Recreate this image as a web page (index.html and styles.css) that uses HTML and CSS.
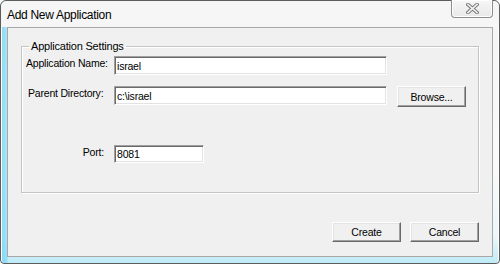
FILE: index.html
```html
<!DOCTYPE html>
<html lang="en">
<head>
    <meta charset="UTF-8">
    <title>Add New Application</title>
    <link rel="stylesheet" href="styles.css">
</head>
<body>

    <div class="window">
        <div class="title-bar">
            <span class="title">Add New Application</span>
            <button class="close-btn" title="Close">
                <svg width="13" height="11" viewBox="0 0 13 11">
                    <path d="M2 1.5 L11 9.5 M11 1.5 L2 9.5" stroke="#7a7a7a" stroke-width="3.6" stroke-linecap="square"/>
                    <path d="M2 1.5 L11 9.5 M11 1.5 L2 9.5" stroke="#f4f4f4" stroke-width="1.6" stroke-linecap="square"/>
                </svg>
            </button>
        </div>

        <div class="client">
            <fieldset class="group">
                <legend>Application Settings</legend>
                <div class="form-grid">
                    <label class="lbl" for="app-name">Application Name:</label>
                    <input class="field" type="text" id="app-name" value="israel">
                    <span></span>

                    <label class="lbl lbl-dir" for="parent-dir">Parent Directory:</label>
                    <input class="field" type="text" id="parent-dir" value="c:\israel">
                    <button class="btn browse-btn">Browse...</button>

                    <label class="lbl lbl-port" for="port">Port:</label>
                    <input class="field port-field" type="text" id="port" value="8081">
                </div>
            </fieldset>

            <div class="footer">
                <button class="btn">Create</button>
                <button class="btn">Cancel</button>
            </div>
        </div>
    </div>

</body>
</html>
```

FILE: styles.css
```css
body {
    margin: 0;
    font-family: "Liberation Sans", Arial, sans-serif;
    font-size: 10.5px;
    letter-spacing: -0.2px;
    color: #000;
}
.window {
    width: 500px;
    height: 264px;
    box-sizing: border-box;
    border: 1px solid #5c5c5c;
    border-radius: 6px 6px 4px 4px;
    padding: 0 6px 6px;
    display: flex;
    flex-direction: column;
    background:
        linear-gradient(90deg, rgba(120, 215, 245, 0.9) 0, rgba(120, 215, 245, 0.6) 6px, rgba(255, 255, 255, 0) 7px),
        linear-gradient(180deg, #f4f4f4 0%, #fafafa 60%, #eaf7fc 90%, #bfeaf8 100%);
    box-shadow: inset 1px 0 0 #fff, inset -1px 0 0 #fff;
}
.title-bar {
    height: 26px;
    display: flex;
    align-items: flex-start;
    background: #f6f6f6;
    margin: 0 -6px;
    padding: 0 6px;
    border-radius: 6px 6px 0 0;
}
.title {
    font-size: 12px;
    letter-spacing: -0.3px;
    line-height: 16px;
    padding-top: 6px;
    color: #000;
}
.close-btn {
    margin-left: auto;
    margin-top: -1px;
    width: 42px;
    height: 18px;
    padding: 0;
    border: 1px solid #8c8c8c;
    border-top: none;
    border-radius: 0 0 4px 4px;
    background: linear-gradient(180deg, #f7f7f7, #e8e8e8);
    box-shadow: inset 0 0 0 1px #fff;
    display: flex;
    align-items: center;
    justify-content: center;
}
.client {
    flex: 1;
    border: 1px solid #a8a8a8;
    background: #f0f0f0;
    display: flex;
    flex-direction: column;
    padding: 0 13px 14px;
}
.group {
    margin: 12px 0 0;
    height: 153px;
    box-sizing: border-box;
    border: 1px solid #c4c4c4;
    box-shadow: inset 1px 1px 0 #fff, 1px 1px 0 #fff;
    padding: 3px 10px 0 4px;
}
.group legend {
    padding: 0 2px;
    margin-left: 3px;
    line-height: 13px;
    font-size: 11px;
}
.form-grid {
    display: grid;
    grid-template-columns: 88px 273px 79px;
    row-gap: 11px;
    align-items: start;
}
.lbl {
    padding-top: 1px;
    line-height: 13px;
    white-space: nowrap;
}
.lbl-dir { padding-left: 2px; }
.lbl-port {
    margin-top: 27px;
    justify-self: end;
    margin-right: 10px;
}
.field {
    height: 19px;
    box-sizing: border-box;
    margin: 0;
    padding: 0 2px;
    font-family: inherit;
    font-size: 10.5px;
    letter-spacing: -0.2px;
    background: #fff;
    border: 1px solid;
    border-color: #a0a0a0 #fff #fff #a0a0a0;
    box-shadow: inset 1px 1px 0 #696969, inset -1px -1px 0 #e3e3e3;
    outline: none;
}
.port-field {
    width: 90px;
    height: 18px;
    margin-top: 27px;
}
.btn {
    height: 20px;
    width: 69px;
    padding: 0;
    font-family: inherit;
    font-size: 10.5px;
    letter-spacing: -0.2px;
    background: #f0f0f0;
    border: 1px solid;
    border-color: #fff #696969 #696969 #fff;
    box-shadow: inset -1px -1px 0 #a0a0a0, inset 1px 1px 0 #e3e3e3;
}
.browse-btn {
    justify-self: end;
    height: 21px;
}
.footer {
    margin-top: auto;
    display: flex;
    justify-content: flex-end;
    gap: 9px;
}
```
